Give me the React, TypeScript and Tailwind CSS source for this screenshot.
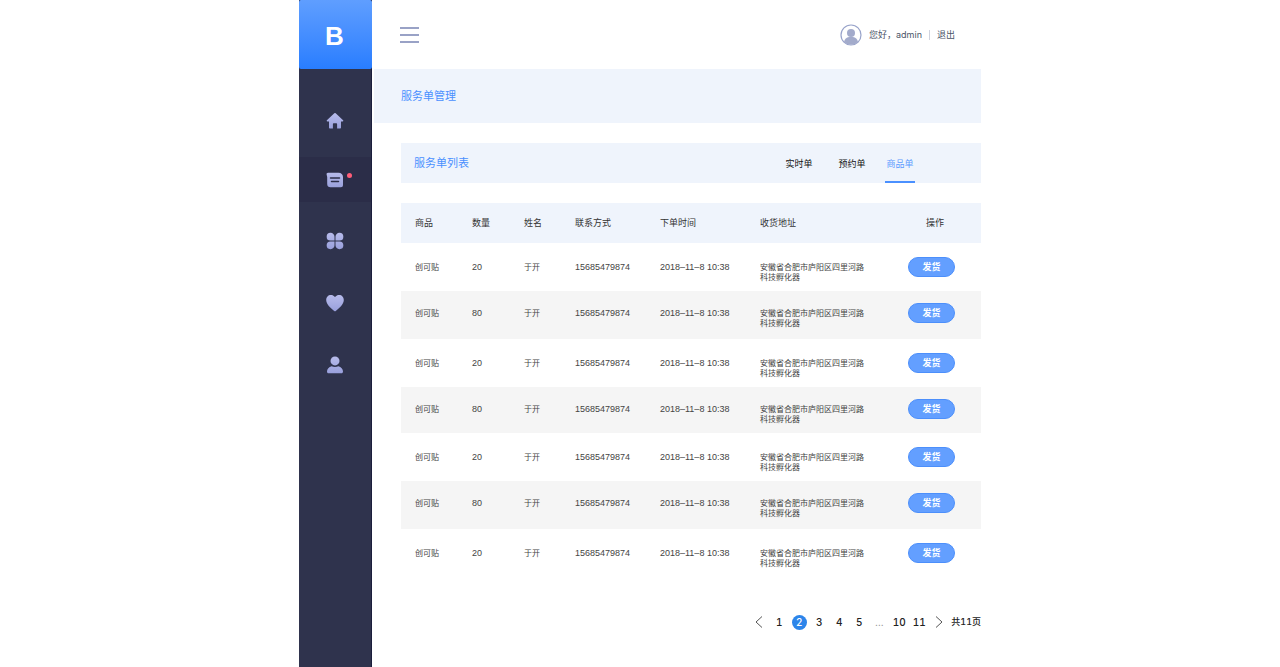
import type { ReactNode } from 'react';
import { clsx } from 'clsx';

interface Order {
    id: number;
    product: string;
    count: number;
    name: string;
    phone: string;
    time: string;
    address: string;
}

const orders: Order[] = [20, 80, 20, 80, 20, 80, 20].map((count, i) => ({
    id: i + 1,
    product: '创可贴',
    count,
    name: '于开',
    phone: '15685479874',
    time: '2018–11–8 10:38',
    address: '安徽省合肥市庐阳区四里河路科技孵化器',
}));

const columns = [
    { label: '商品', width: 'w-[71px]' },
    { label: '数量', width: 'w-[52px]' },
    { label: '姓名', width: 'w-[51px]' },
    { label: '联系方式', width: 'w-[85px]' },
    { label: '下单时间', width: 'w-[100px]' },
    { label: '收货地址', width: 'w-[148px]' },
    { label: '操作', width: '' },
];

const tabs = ['实时单', '预约单', '商品单'];
const pages = ['1', '2', '3', '4', '5', '…', '10', '11'];

const NavIcon = ({ children }: { children: ReactNode }) => (
    <svg viewBox="0 0 18 18" className="size-[18px]" fill="url(#nav-fill)" aria-hidden="true">
        {children}
    </svg>
);

const navItems = [
    {
        label: '首页',
        icon: (
            <NavIcon>
                <path d="M8.300 1.300a1 1 0 0 1 1.400 0l7.400 7c.5.5.2 1.200-.5 1.200H15v6.200c0 .5-.3.800-.8.800h-3.100v-4.200c0-.6-.4-1-1-1H7.900c-.6 0-1 .4-1 1v4.200H3.800c-.5 0-.8-.3-.8-.8V9.500H1.400c-.7 0-1-.7-.5-1.200z" />
            </NavIcon>
        ),
    },
    {
        label: '服务单',
        badge: true,
        icon: (
            <NavIcon>
                <path d="M2 1.800h10.500c2.600 0 4.500 1.700 4.500 4.200v8.200a2 2 0 0 1-2 2H4.500A3.300 3.300 0 0 1 1.200 13V6L.6 3.600C.4 2.600 1 1.800 2 1.800z" />
                <path d="M4.500 7h9M5.500 10.500h7" stroke="#2b2d48" strokeWidth="1.5" strokeLinecap="round" fill="none" />
            </NavIcon>
        ),
    },
    {
        label: '分类',
        icon: (
            <NavIcon>
                <path d="M4.500.800A3.900 3.900 0 0 1 8.500 4.700v3.800H4.500a3.800 3.800 0 0 1 0-7.700z" />
                <path d="M13.500.800A3.900 3.900 0 0 0 9.500 4.700v3.800h4a3.800 3.800 0 0 0 0-7.700z" />
                <path d="M4.500 17.200A3.900 3.900 0 0 0 8.500 13.300V9.500H4.500a3.800 3.800 0 0 0 0 7.700z" />
                <path d="M13.500 17.200A3.900 3.900 0 0 1 9.500 13.300V9.500h4a3.800 3.800 0 0 1 0 7.700z" />
            </NavIcon>
        ),
    },
    {
        label: '收藏',
        icon: (
            <NavIcon>
                <path d="M9 3C7.800 1.500 6.400.900 4.900.900 2.200.900.200 3 .200 5.900c0 4.300 4.300 7.700 8 11 .5.4 1.100.4 1.600 0 3.700-3.300 8-6.700 8-11 0-2.900-2-5-4.700-5C11.600.900 10.200 1.500 9 3z" />
            </NavIcon>
        ),
    },
    {
        label: '用户',
        icon: (
            <NavIcon>
                <circle cx="9" cy="4.900" r="4.500" />
                <path d="M5.600 10.200c2.100 1.100 4.700 1.100 6.800 0 2.600.7 4.600 2.700 4.600 5.300 0 1.200-.6 1.800-1.600 1.800H2.600c-1 0-1.600-.6-1.600-1.800 0-2.600 2-4.600 4.600-5.300z" />
            </NavIcon>
        ),
    },
];

const Sidebar = () => (
    <aside className="w-[73px] shrink-0 border-r border-[#1b1e3c] bg-[#2f334d]">
        <svg className="absolute size-0" aria-hidden="true">
            <defs>
                <linearGradient id="nav-fill" x1="0" y1="0" x2="0" y2="18" gradientUnits="userSpaceOnUse">
                    <stop offset="0" stopColor="#b9bdec" />
                    <stop offset="1" stopColor="#979edb" />
                </linearGradient>
            </defs>
        </svg>
        <a
            href="#"
            className="-mr-px flex h-[69px] items-center justify-center rounded-xs bg-linear-to-b from-[#5f9eff] to-[#287dff] pr-0.5 pt-1 font-['Liberation_Sans',sans-serif] text-[26px] font-bold text-white"
        >
            B
        </a>
        <nav className="flex flex-col gap-4 pt-8">
            {navItems.map((item, i) => (
                <a
                    key={item.label}
                    href="#"
                    aria-label={item.label}
                    className={clsx(
                        'flex items-center justify-center',
                        i === 0 && 'h-10',
                        i === 1 && 'h-[45px]',
                        i > 1 && 'h-[46px]',
                        item.badge && 'bg-[#2b2d48]'
                    )}
                >
                    <span className="relative">
                        {item.icon}
                        {item.badge && (
                            <span className="absolute -right-2 top-0.5 size-[5px] rounded-full bg-[#ff5d78]" />
                        )}
                    </span>
                </a>
            ))}
        </nav>
    </aside>
);

const Header = () => (
    <header className="flex h-[69px] items-center justify-between pl-7 pr-[26px]">
        <button aria-label="菜单" className="flex w-[19px] flex-col gap-[5px]">
            <span className="h-0.5 w-full bg-[#99a2c6]" />
            <span className="h-0.5 w-full bg-[#99a2c6]" />
            <span className="h-0.5 w-full bg-[#99a2c6]" />
        </button>
        <div className="flex items-center text-[9px] leading-3 text-[#4a5568]">
            <svg viewBox="0 0 22 22" className="mr-[7px] size-[22px]" aria-hidden="true">
                <circle cx="11" cy="11" r="10" fill="#fff" stroke="#98a3ca" strokeWidth="1.200" />
                <circle cx="11" cy="9" r="4" fill="#a3abcb" />
                <path d="M4 18c.5-3 2.500-4.500 5-5h4c2.500.5 4.500 2 5 5a10 10 0 0 1-14 0z" fill="#a3abcb" />
            </svg>
            <span>您好，admin</span>
            <span className="mx-[7px] h-2.5 w-px bg-[#cfd3df]" />
            <a href="#">退出</a>
        </div>
    </header>
);

const OrderTable = () => (
    <table className="mt-5 w-full table-fixed text-left text-[8px] leading-[10px] text-[#444]">
        <thead>
            <tr className="h-10 bg-[#eff4fc] text-[9px] text-[#333]">
                {columns.map((col, i) => (
                    <th
                        key={col.label}
                        className={clsx('font-normal', col.width, i === 0 && 'pl-3.5', i === 6 && 'pl-[18px]')}
                    >
                        {col.label}
                    </th>
                ))}
            </tr>
        </thead>
        <tbody>
            {orders.map((order) => (
                <tr
                    key={order.id}
                    className={clsx(
                        'align-top *:pt-[19px] even:bg-[#f5f5f5] even:*:pt-[17px]',
                        order.id === 4 ? 'h-[46px]' : 'h-12'
                    )}
                >
                    <td className="pl-3.5">{order.product}</td>
                    <td className="font-['Liberation_Sans',sans-serif] text-[9px]">{order.count}</td>
                    <td>{order.name}</td>
                    <td className="font-['Liberation_Sans',sans-serif] text-[9px]">{order.phone}</td>
                    <td className="font-['Liberation_Sans',sans-serif] text-[9px]">{order.time}</td>
                    <td>
                        <p className="w-[106px]">{order.address}</p>
                    </td>
                    <td>
                        <button className="-mt-[5px] block h-5 w-[47px] rounded-full border border-[#4c8ffb] bg-[#639fff] text-[9px] font-bold leading-3 text-white">
                            发货
                        </button>
                    </td>
                </tr>
            ))}
        </tbody>
    </table>
);

const Chevron = ({ d }: { d: string }) => (
    <svg viewBox="0 0 8 12" className="h-3 w-2" fill="none" stroke="#555" strokeWidth="1" aria-hidden="true">
        <path d={d} />
    </svg>
);

const Pagination = () => (
    <nav className="mt-[35px] flex h-5 items-center justify-end text-[10px] leading-3 font-medium text-[#222] tabular-nums">
        <button aria-label="上一页" className="flex w-5 justify-center">
            <Chevron d="M7 .5 1 6l6 5.500" />
        </button>
        {pages.map((page) =>
            page === '…' ? (
                <span key={page} className="w-5 text-center font-normal text-[#888]">
                    {page}
                </span>
            ) : (
                <button key={page} className="flex w-5 justify-center">
                    <span
                        className={clsx(
                            'flex h-[15px] min-w-[15px] items-center justify-center rounded-full',
                            page === '2' && 'bg-[#2c85ea] text-white'
                        )}
                    >
                        {page}
                    </span>
                </button>
            )
        )}
        <button aria-label="下一页" className="flex w-5 justify-center">
            <Chevron d="m1 .5 6 5.500-6 5.500" />
        </button>
        <span className="ml-0.5 text-[9px]">共11页</span>
    </nav>
);

export default function App() {
    return (
        <div className="min-h-screen bg-white font-['Inter','Noto_Sans_CJK_SC',sans-serif]">
            <div className="mx-auto flex min-h-screen max-w-[682px]">
                <Sidebar />
                <div className="min-w-0 flex-1">
                    <Header />
                    <h1 className="ml-0.5 flex h-[54px] items-center bg-[#eff4fc] pl-[27px] text-[11px] font-normal text-[#4a90ff]">
                        服务单管理
                    </h1>
                    <main className="pl-[29px] pt-5">
                        <div className="flex h-10 items-stretch justify-between bg-[#eff4fc] pl-[13px] pr-[66px]">
                            <h2 className="self-center text-[11px] font-normal text-[#4a90ff]">服务单列表</h2>
                            <div className="flex gap-[18px] text-[9px]" role="tablist">
                                {tabs.map((tab) => (
                                    <button
                                        key={tab}
                                        role="tab"
                                        aria-selected={tab === '商品单'}
                                        className="w-[30px] border-b-2 border-transparent pt-[3px] text-[#111] first:mr-[5px] aria-selected:border-b-[#4a90ff] aria-selected:text-[#5c9bff]"
                                    >
                                        {tab}
                                    </button>
                                ))}
                            </div>
                        </div>
                        <OrderTable />
                        <Pagination />
                    </main>
                </div>
            </div>
        </div>
    );
}
